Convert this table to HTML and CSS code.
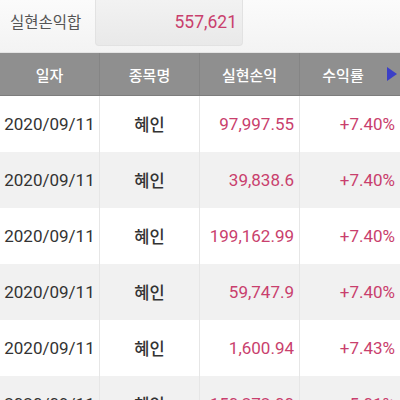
FILE: index.html
```html
<!DOCTYPE html>
<html lang="ko">
<head>
<meta charset="utf-8">
<link rel="stylesheet" href="styles.css">
</head>
<body>
<div class="summary">
  <div class="sum-label">실현손익합</div>
  <div class="sum-box">557,621</div>
</div>
<div class="head">
  <div class="hc">일자</div>
  <div class="hc">종목명</div>
  <div class="hc">실현손익</div>
  <div class="hc last">수익률<span class="tri"></span></div>
</div>
<div class="rows">
  <div class="row"><div class="c date">2020/09/11</div><div class="c name">혜인</div><div class="c num">97,997.55</div><div class="c num">+7.40%</div></div>
  <div class="row alt"><div class="c date">2020/09/11</div><div class="c name">혜인</div><div class="c num">39,838.6</div><div class="c num">+7.40%</div></div>
  <div class="row"><div class="c date">2020/09/11</div><div class="c name">혜인</div><div class="c num">199,162.99</div><div class="c num">+7.40%</div></div>
  <div class="row alt"><div class="c date">2020/09/11</div><div class="c name">혜인</div><div class="c num">59,747.9</div><div class="c num">+7.40%</div></div>
  <div class="row"><div class="c date">2020/09/11</div><div class="c name">혜인</div><div class="c num">1,600.94</div><div class="c num">+7.43%</div></div>
  <div class="row alt"><div class="c date">2020/09/11</div><div class="c name">혜인</div><div class="c num">150,272.00</div><div class="c num">+5.01%</div></div>
</div>
</body>
</html>
```
FILE: styles.css
```css
* { box-sizing: border-box; }
html, body { margin: 0; padding: 0; }
body {
  width: 400px;
  height: 400px;
  overflow: hidden;
  background: #fff;
  font-family: Roboto, "Noto Sans CJK KR", sans-serif;
}
.summary {
  height: 53px;
  display: flex;
  align-items: flex-start;
  background: linear-gradient(#fbfbfb, #f3f3f3);
  border-bottom: 1px solid #e4e4e4;
}
.sum-label {
  width: 95px;
  height: 46px;
  line-height: 46px;
  padding-left: 10px;
  font-size: 15.5px;
  color: #555;
}
.sum-box {
  width: 148px;
  height: 46px;
  line-height: 44px;
  text-align: right;
  padding-right: 5px;
  font-size: 17.5px;
  color: #c93f6d;
  background: linear-gradient(#f2f2f2, #e9e9e9);
  border: 1px solid #e2e2e2;
  border-top: none;
  border-radius: 0 0 4px 4px;
}
.head {
  height: 43px;
  display: grid;
  grid-template-columns: 100px 100px 100px 100px;
  background: #8f8f8f;
  border-bottom: 1px solid #7d7d7d;
}
.hc {
  display: flex;
  align-items: center;
  justify-content: center;
  color: #fff;
  font-size: 15px;
  font-weight: 500;
  border-right: 1px solid #858585;
}
.hc.last {
  border-right: none;
  position: relative;
  padding-right: 14px;
}
.tri {
  position: absolute;
  right: 3px;
  top: 14px;
  width: 0;
  height: 0;
  border-top: 7px solid transparent;
  border-bottom: 7px solid transparent;
  border-left: 10px solid #3b3fc6;
}
.row {
  height: 56px;
  display: grid;
  grid-template-columns: 100px 100px 100px 100px;
  background: #fff;
}
.row.alt { background: #f1f1f1; }
.c {
  display: flex;
  align-items: center;
  border-right: 1px solid #e6e6e6;
  font-size: 17px;
}
.c:last-child { border-right: none; }
.date {
  justify-content: center;
  color: #333;
}
.name {
  justify-content: center;
  color: #333;
  font-weight: 500;
  font-size: 16.5px;
}
.num {
  justify-content: flex-end;
  padding-right: 5px;
  color: #c93f6d;
}
```
